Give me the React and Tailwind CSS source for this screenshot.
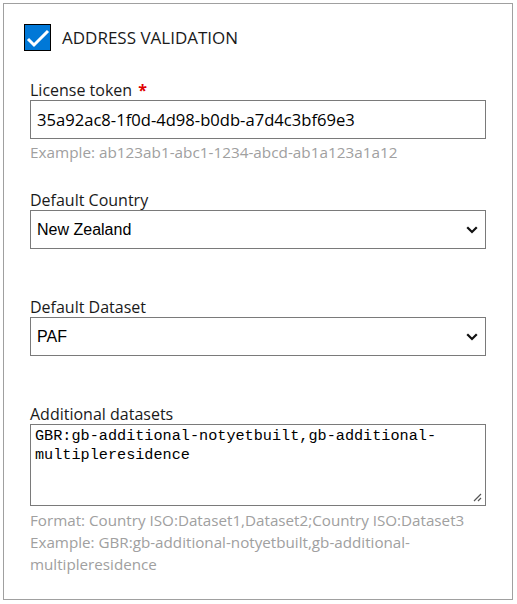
import React from "react";

const ui = { fontFamily: '"Open Sans", "Noto Sans", Arial, sans-serif' };
const mono = { fontFamily: '"Liberation Mono", "DejaVu Sans Mono", monospace' };
const arial = { fontFamily: '"Liberation Sans", Arial, sans-serif' };

function Chevron() {
  return (
    <svg width="12" height="8" viewBox="0 0 12 8" className="absolute right-[7px] top-1/2 -translate-y-1/2">
      <path d="M2 2 L6 6 L10 2" fill="none" stroke="#111" strokeWidth="2.2" strokeLinecap="square" />
    </svg>
  );
}

function SelectBox({ value }) {
  return (
    <div className="relative h-[39px] w-full border border-[#7a7a7a] bg-white">
      <div className="pl-[6px] leading-[37px] text-[16px] text-black" style={arial}>
        {value}
      </div>
      <Chevron />
    </div>
  );
}

function Label({ children, required }) {
  return (
    <div className="text-[16px] leading-[20px] text-[#1a1a1a]" style={ui}>
      {children}
      {required && <span className="ml-[6px] font-bold text-[#e00000]">*</span>}
    </div>
  );
}

export default function App() {
  return (
    <div className="bg-white w-[517px] h-[604px] pt-[3px] pl-[3px]">
      <div className="w-[510px] h-[597px] border border-[#a0a0a0] bg-white">
        <div className="flex items-center pt-[20px] pl-[20px]">
          <div className="w-[27px] h-[27px] bg-[#0078d7] border border-black flex items-center justify-center">
            <svg width="24" height="20" viewBox="0 0 24 20">
              <path d="M2 11 L8 17 L22 3" fill="none" stroke="white" strokeWidth="3" />
            </svg>
          </div>
          <div className="ml-[11px] text-[17px] leading-[27px] text-[#1a1a1a]" style={ui}>
            ADDRESS VALIDATION
          </div>
        </div>

        <div className="px-[26px]">
          <div className="mt-[29px]">
            <Label required>License token</Label>
            <div className="h-[39px] w-full border border-[#7a7a7a] pl-[6px] leading-[37px] text-[16.6px] text-black" style={ui}>
              35a92ac8-1f0d-4d98-b0db-a7d4c3bf69e3
            </div>
            <div className="mt-[3px] text-[15.3px] leading-[20px] text-[#a0a0a0]" style={ui}>
              Example: ab123ab1-abc1-1234-abcd-ab1a123a1a12
            </div>
          </div>

          <div className="mt-[28px]">
            <Label>Default Country</Label>
            <SelectBox value="New Zealand" />
          </div>

          <div className="mt-[48px]">
            <Label>Default Dataset</Label>
            <SelectBox value="PAF" />
          </div>

          <div className="mt-[48px]">
            <Label>Additional datasets</Label>
            <div className="relative h-[82px] w-full border border-[#7a7a7a] px-[4px] pt-[2px] text-[15.2px] leading-[19px] text-black" style={mono}>
              <div>GBR:gb-additional-notyetbuilt,gb-additional-</div>
              <div>multipleresidence</div>
              <svg width="10" height="10" viewBox="0 0 10 10" className="absolute right-[3px] bottom-[3px]">
                <path d="M9 2 L2 9 M9 6 L6 9" stroke="#555" strokeWidth="1.2" fill="none" />
              </svg>
            </div>
            <div className="mt-[3px] text-[15.2px] leading-[22px] text-[#a0a0a0]" style={ui}>
              <div>Format: Country ISO:Dataset1,Dataset2;Country ISO:Dataset3</div>
              <div>Example: GBR:gb-additional-notyetbuilt,gb-additional-</div>
              <div>multipleresidence</div>
            </div>
          </div>
        </div>
      </div>
    </div>
  );
}
